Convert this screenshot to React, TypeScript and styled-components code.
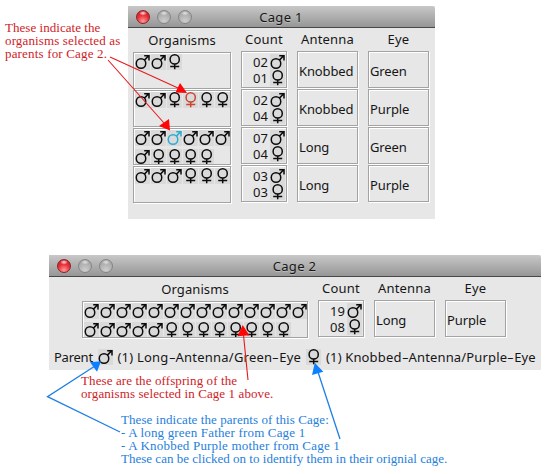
import React from "react";
import styled, { createGlobalStyle } from "styled-components";

const GlobalStyle = createGlobalStyle`
  * { box-sizing: border-box; }
  body { margin: 0; background: #fff; overflow: hidden; }
`;

const Page = styled.main`
  position: relative;
  width: 554px;
  height: 474px;
  overflow: hidden;
  background: #fff;
  padding-top: 6px;
  display: flex;
  flex-direction: column;
  align-items: flex-start;
  gap: 36px;
`;

const Window = styled.section<{ $left: number; $width: number; $height: number }>`
  margin-left: ${(p) => p.$left}px;
  width: ${(p) => p.$width}px;
  height: ${(p) => p.$height}px;
  background: #e7e7e7;
  color: #161616;
  font: 13px/16px "Noto Sans", "Open Sans", sans-serif;
  white-space: nowrap;
`;

const TitleBar = styled.header`
  display: grid;
  grid-template-columns: 1fr auto 1fr;
  align-items: center;
  height: 22px;
  padding: 0 9px 0 8px;
  border-bottom: 1px solid #484848;
  border-radius: 0 3px 0 0;
  background: linear-gradient(#c8c8c8, #b4b4b4 40%, #969696);
`;

const Title = styled.span`
  letter-spacing: 0.32px;
  text-shadow: 0 1px 0 rgba(255, 255, 255, 0.3);
`;

const Lights = styled.div`
  display: flex;
  gap: 7px;
`;

const Light = styled.i<{ $active?: boolean }>`
  width: 14px;
  height: 14px;
  border-radius: 50%;
  border: 1px solid ${(p) => (p.$active ? "#8c2226" : "#858585")};
  background: ${(p) =>
    p.$active
      ? "radial-gradient(ellipse 4px 2.5px at 50% 18%, #ffe0e0, transparent), radial-gradient(circle at 50% 85%, #ff9a94, #e8323a 50%, #b5141c)"
      : "radial-gradient(ellipse 4px 2.5px at 50% 18%, #e4e4e4, transparent), radial-gradient(circle at 50% 85%, #cecece, #aeaeae 60%, #9a9a9a)"};
`;

const Columns = styled.div<{ $left: number }>`
  display: flex;
  align-items: flex-start;
  padding: 4px 0 0 ${(p) => p.$left}px;
`;

const Column = styled.div<{ $width: number; $gap?: number; $drop?: number }>`
  width: ${(p) => p.$width}px;
  margin-right: ${(p) => p.$gap ?? 0}px;
  padding-top: ${(p) => p.$drop ?? 0}px;
  display: flex;
  flex-direction: column;
`;

const Heading = styled.div<{ $spacing?: number }>`
  height: 19px;
  margin-top: -1px;
  margin-bottom: 1px;
  text-align: center;
  letter-spacing: ${(p) => p.$spacing ?? 0.2}px;
`;

const Cell = styled.div`
  height: 37px;
  margin-bottom: 1px;
  border: 1px solid #a3a3a3;
  box-shadow: inset 1px 1px 0 #fff, 1px 1px 0 #fff;
`;

const TextCell = styled(Cell)`
  display: flex;
  align-items: center;
  padding: 2px 0 0 1px;
  letter-spacing: -0.12px;
`;

const OrganismCell = styled(Cell)`
  display: flex;
  flex-direction: column;
  gap: 3px;
  padding: 1px 0 0 1px;
  overflow: hidden;
`;

const IconRow = styled.div`
  display: flex;
  flex: none;
  gap: 1px;
  height: 16px;
`;

const CountCell = styled(Cell)`
  padding: 2px 1px 0 0;
`;

const CountLine = styled.div`
  display: flex;
  justify-content: flex-end;
  align-items: center;
  gap: 2px;
  height: 16px;
  line-height: 16px;
  letter-spacing: 0.1px;
`;

const Icon = styled.svg<{ $color: string }>`
  display: block;
  flex: none;
  width: 15px;
  height: 16px;
  background: #dadada;
  overflow: visible;
  fill: none;
  stroke: ${(p) => p.$color};
  stroke-width: 1.5;
`;

const ParentRow = styled.footer`
  display: flex;
  align-items: center;
  padding: 9px 0 0 5px;
`;

const ParentText = styled.span<{ $spacing: number; $width: number; $indent?: number }>`
  width: ${(p) => p.$width}px;
  padding: 1px 0 0 ${(p) => p.$indent ?? 0}px;
  letter-spacing: ${(p) => p.$spacing}px;
`;

const Hyphen = styled.span`
  display: inline-block;
  width: 7px;
  letter-spacing: 0;
  transform: scaleX(1.6);
  transform-origin: 0 50%;
`;

const Note = styled.div<{ $x: number; $y: number; $color: string }>`
  position: absolute;
  left: ${(p) => p.$x}px;
  top: ${(p) => p.$y}px;
  color: ${(p) => p.$color};
  font: 13px/13px "Liberation Serif", serif;
  white-space: nowrap;
`;

const NoteLine = styled.div<{ $spacing: number }>`
  letter-spacing: ${(p) => p.$spacing}px;
`;

const Arrows = styled.svg`
  position: absolute;
  inset: 0;
  pointer-events: none;
`;

type Sex = "m" | "f";

function Organism({ sex, color = "#0c0c0c" }: { sex: Sex; color?: string }) {
  return (
    <Icon $color={color} viewBox="0 0 15 16">
      {sex === "m" ? (
        <>
          <circle cx="6" cy="9.5" r="4.75" />
          <path d="M9.4 6.1 13.7 1.8M9.2 1.7H14V6.5" />
        </>
      ) : (
        <>
          <circle cx="7.7" cy="5.4" r="4.6" />
          <path d="M7.7 10V15.2M3.2 12.6H12.2" />
        </>
      )}
    </Icon>
  );
}

// Each string is one line of organisms; capitals mark the selected parents.
function Organisms({ lines }: { lines: string[] }) {
  return (
    <OrganismCell>
      {lines.map((line, i) => (
        <IconRow key={i}>
          {line.split("").map((c, j) => (
            <Organism
              key={j}
              sex={c.toLowerCase() as Sex}
              color={c === "F" ? "#cb452f" : c === "M" ? "#2bacd3" : undefined}
            />
          ))}
        </IconRow>
      ))}
    </OrganismCell>
  );
}

interface Group {
  lines: string[];
  males: string;
  females: string;
  antenna: string;
  eye: string;
}

const cageOne: Group[] = [
  { lines: ["mmf"], males: "02", females: "01", antenna: "Knobbed", eye: "Green" },
  { lines: ["mmfFff"], males: "02", females: "04", antenna: "Knobbed", eye: "Purple" },
  { lines: ["mmMmmm", "mffff"], males: "07", females: "04", antenna: "Long", eye: "Green" },
  { lines: ["mmmfff"], males: "03", females: "03", antenna: "Long", eye: "Purple" },
];

const cageTwo: Group[] = [
  { lines: ["mmmmmmmmmmmmmm", "mmmmmffffffff"], males: "19", females: "08", antenna: "Long", eye: "Purple" },
];

function Cage(props: { groups: Group[]; left: number; organismWidth: number }) {
  const { groups, left, organismWidth } = props;
  return (
    <Columns $left={left}>
      <Column $width={organismWidth} $gap={10} $drop={1}>
        <Heading $spacing={0.1}>Organisms</Heading>
        {groups.map((g, i) => <Organisms key={i} lines={g.lines} />)}
      </Column>
      <Column $width={46} $gap={10}>
        <Heading>Count</Heading>
        {groups.map((g, i) => (
          <CountCell key={i}>
            <CountLine>{g.males}<Organism sex="m" /></CountLine>
            <CountLine>{g.females}<Organism sex="f" /></CountLine>
          </CountCell>
        ))}
      </Column>
      <Column $width={61} $gap={10}>
        <Heading>Antenna</Heading>
        {groups.map((g, i) => <TextCell key={i}>{g.antenna}</TextCell>)}
      </Column>
      <Column $width={61}>
        <Heading>Eye</Heading>
        {groups.map((g, i) => <TextCell key={i}>{g.eye}</TextCell>)}
      </Column>
    </Columns>
  );
}

function Bar({ title }: { title: string }) {
  return (
    <TitleBar>
      <Lights><Light $active /><Light /><Light /></Lights>
      <Title>{title}</Title>
    </TitleBar>
  );
}

const RED = "#cf2227";
const BLUE = "#2580dc";

export default function App() {
  return (
    <>
      <GlobalStyle />
      <Page>
        <Window $left={128} $width={307} $height={213}>
          <Bar title="Cage 1" />
          <Cage groups={cageOne} left={5} organismWidth={98} />
        </Window>
        <Window $left={49} $width={492} $height={115}>
          <Bar title="Cage 2" />
          <Cage groups={cageTwo} left={33} organismWidth={226} />
          <ParentRow>
            <ParentText $width={44} $spacing={-0.25}>Parent</ParentText>
            <Organism sex="m" />
            <ParentText $width={193} $spacing={0.22} $indent={4.5}>
              (1) Long<Hyphen>-</Hyphen>Antenna/Green<Hyphen>-</Hyphen>Eye
            </ParentText>
            <Organism sex="f" />
            <ParentText $width={218} $spacing={0.15} $indent={5}>
              (1) Knobbed<Hyphen>-</Hyphen>Antenna/Purple<Hyphen>-</Hyphen>Eye
            </ParentText>
          </ParentRow>
        </Window>

        <Note $x={5} $y={21} $color={RED}>
          <NoteLine $spacing={0.04}>These indicate the</NoteLine>
          <NoteLine $spacing={0.14}>organisms selected as</NoteLine>
          <NoteLine $spacing={0.17}>parents for Cage 2.</NoteLine>
        </Note>
        <Note $x={81} $y={374} $color={RED}>
          <NoteLine $spacing={0.1}>These are the offspring of the</NoteLine>
          <NoteLine $spacing={0.1}>organisms selected in Cage 1 above.</NoteLine>
        </Note>
        <Note $x={121} $y={413} $color={BLUE}>
          <NoteLine $spacing={0.07}>These indicate the parents of this Cage:</NoteLine>
          <NoteLine $spacing={0.17}>- A long green Father from Cage 1</NoteLine>
          <NoteLine $spacing={0.19}>- A Knobbed Purple mother from Cage 1</NoteLine>
          <NoteLine $spacing={0.01}>These can be clicked on to identify them in their orignial cage.</NoteLine>
        </Note>

        <Arrows width="554" height="474" viewBox="0 0 554 474" fill="none">
          <g stroke="#e8191c" strokeWidth="1.1">
            <path d="M110 57 178 88M108 60 164 123M248 380 243.5 335" />
          </g>
          <path fill="#ff0505" d="M187 93 180 83 175.5 92.5ZM170 130.5 169 119 159 126ZM242.7 325 237.5 336.3 249.3 335.3Z" />
          <path stroke="#1f7fe6" strokeWidth="1.3" d="M95 366 47.5 396.7 120 432M318 372 340 439" />
          <path fill="#0c80ff" d="M101 361.3 90 362.3 97 371.8ZM314.8 362.7 312 375 323.3 371.7Z" />
        </Arrows>
      </Page>
    </>
  );
}
